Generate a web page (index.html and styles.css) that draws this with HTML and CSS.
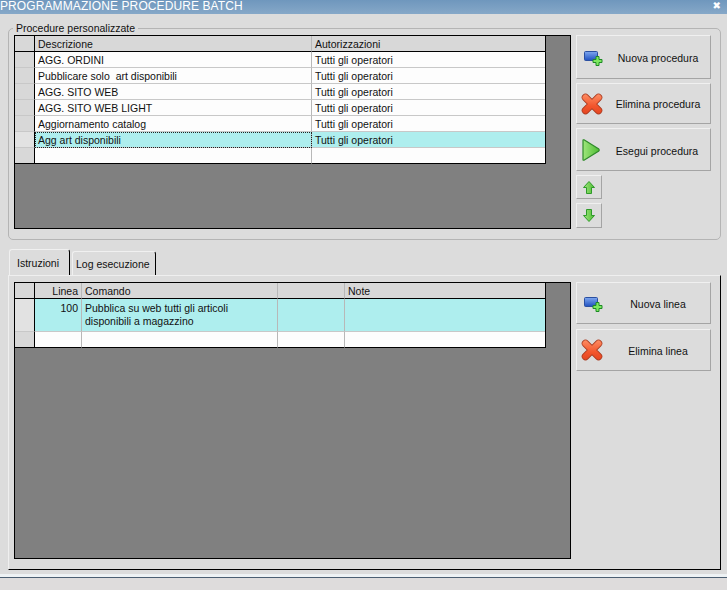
FILE: index.html
```html
<!DOCTYPE html>
<html lang="it">
<head>
<meta charset="utf-8">
<title>Programmazione procedure batch</title>
<link rel="stylesheet" href="styles.css">
</head>
<body>
<svg class="defs" width="0" height="0" aria-hidden="true">
  <defs>
    <linearGradient id="blue" x1="0" y1="0" x2="0" y2="1"><stop offset="0" stop-color="#7fa8f0"/><stop offset="1" stop-color="#1f50c0"/></linearGradient>
    <linearGradient id="green" x1="0" y1="0" x2="1" y2="0"><stop offset="0" stop-color="#9fe67c"/><stop offset="1" stop-color="#4fbc34"/></linearGradient>
    <linearGradient id="redstroke" gradientUnits="userSpaceOnUse" x1="0" y1="0" x2="0" y2="22"><stop offset="0" stop-color="#ff9268"/><stop offset="0.6" stop-color="#f2552c"/><stop offset="1" stop-color="#e2431f"/></linearGradient>
    <symbol id="i-new" viewBox="0 0 20 16">
      <rect x="0.500" y="0.500" width="13" height="9" rx="1" fill="url(#blue)" stroke="#2a4fa0"/>
      <path d="M12 5.500h3v3h3v3h-3v3h-3v-3h-3v-3h3z" fill="#7ee860" stroke="#1d8a24"/>
    </symbol>
    <symbol id="i-del" viewBox="0 0 22 22">
      <path d="M4.500 4.500 L17.500 17.500 M17.500 4.500 L4.500 17.500" fill="none" stroke="#a83a20" stroke-width="7.500" stroke-linecap="round"/>
      <path d="M4.500 4.500 L17.500 17.500 M17.500 4.500 L4.500 17.500" fill="none" stroke="url(#redstroke)" stroke-width="6" stroke-linecap="round"/>
    </symbol>
    <symbol id="i-play" viewBox="0 0 18 22">
      <path d="M1 1.500 Q1 0.500 2 0.800 L16.800 10 Q17.600 11 16.800 12 L2 21.200 Q1 21.500 1 20.500z" fill="url(#green)" stroke="#2f8a2a" stroke-width="1.200"/>
    </symbol>
    <symbol id="i-up" viewBox="0 0 12 13">
      <path d="M6 0.500 L11.500 6.500 H8.500 V12.500 H3.500 V6.500 H0.500z" fill="url(#green)" stroke="#2f9a2a"/>
    </symbol>
    <symbol id="i-down" viewBox="0 0 12 13">
      <path d="M6 12.500 L11.500 6.500 H8.500 V0.500 H3.500 V6.500 H0.500z" fill="url(#green)" stroke="#2f9a2a"/>
    </symbol>
  </defs>
</svg>

<header class="titlebar">
  <span class="title">PROGRAMMAZIONE PROCEDURE BATCH</span>
  <span class="close">✖</span>
</header>

<section class="group">
  <span class="legend">Procedure personalizzate</span>
  <div class="grid-area grid-area-top">
    <table class="grid">
      <colgroup><col class="c-ind"><col class="c-desc"><col class="c-auth"></colgroup>
      <thead><tr><th></th><th>Descrizione</th><th>Autorizzazioni</th></tr></thead>
      <tbody>
        <tr><th></th><td>AGG. ORDINI</td><td>Tutti gli operatori</td></tr>
        <tr><th></th><td>Pubblicare solo&nbsp; art disponibili</td><td>Tutti gli operatori</td></tr>
        <tr><th></th><td>AGG. SITO WEB</td><td>Tutti gli operatori</td></tr>
        <tr><th></th><td>AGG. SITO WEB LIGHT</td><td>Tutti gli operatori</td></tr>
        <tr><th></th><td>Aggiornamento catalog</td><td>Tutti gli operatori</td></tr>
        <tr class="selected"><th></th><td class="focus">Agg art disponibili</td><td>Tutti gli operatori</td></tr>
        <tr class="last"><th></th><td></td><td></td></tr>
      </tbody>
    </table>
  </div>
  <div class="actions">
    <button class="btn btn-top"><svg class="ico ico-new"><use href="#i-new"/></svg><span class="label">Nuova procedura</span></button>
    <button class="btn btn-mid"><svg class="ico ico-del"><use href="#i-del"/></svg><span class="label">Elimina procedura</span></button>
    <button class="btn btn-run"><svg class="ico ico-play"><use href="#i-play"/></svg><span class="label">Esegui procedura</span></button>
    <button class="btn-small btn-small-up" aria-label="Su"><svg class="ico-arrow"><use href="#i-up"/></svg></button>
    <button class="btn-small" aria-label="Giù"><svg class="ico-arrow"><use href="#i-down"/></svg></button>
  </div>
</section>

<nav class="tabs">
  <span class="tab active">Istruzioni</span>
  <span class="tab">Log esecuzione</span>
</nav>

<section class="panel">
  <div class="grid-area grid-area-bottom">
    <table class="grid">
      <colgroup><col class="c-ind"><col class="c-line"><col class="c-cmd"><col class="c-blank"><col class="c-note"></colgroup>
      <thead><tr><th></th><th class="num">Linea</th><th>Comando</th><th></th><th>Note</th></tr></thead>
      <tbody>
        <tr class="selected tall"><th></th><td class="num top">100</td><td class="top">Pubblica su web tutti gli articoli<br>disponibili a magazzino</td><td></td><td></td></tr>
        <tr class="last"><th></th><td></td><td></td><td></td><td></td></tr>
      </tbody>
    </table>
  </div>
  <div class="actions actions-low">
    <button class="btn btn-low"><svg class="ico ico-new"><use href="#i-new"/></svg><span class="label">Nuova linea</span></button>
    <button class="btn btn-low"><svg class="ico ico-del"><use href="#i-del"/></svg><span class="label">Elimina linea</span></button>
  </div>
</section>

<footer class="statusbar"></footer>
</body>
</html>
```

FILE: styles.css
```css
* { box-sizing: border-box; }

html, body {
  margin: 0;
  height: 590px;
  overflow: hidden;
}

body {
  background: #dcdcdc;
  color: #111;
  font-family: "Liberation Sans", Arial, sans-serif;
  font-size: 10.5px;
  line-height: 13px;
}

.defs { display: block; height: 0; }

.titlebar {
  height: 14px;
  display: flex;
  justify-content: space-between;
  align-items: flex-start;
  background: linear-gradient(#6f97bd, #86a8c8);
  color: #fff;
  overflow: hidden;
}

.title {
  font-size: 12px;
  line-height: 13px;
  letter-spacing: 0.1px;
  white-space: nowrap;
}

.close {
  font-size: 10px;
  line-height: 12px;
  font-weight: bold;
  margin-right: 6px;
  font-family: "DejaVu Sans", sans-serif;
}

.group {
  position: relative;
  display: flex;
  gap: 5px;
  height: 212px;
  margin: 14px 6px 0 8px;
  padding: 6px 9px 0 5px;
  border: 1px solid #b4b4b4;
  border-radius: 5px;
}

.legend {
  position: absolute;
  top: -7px;
  left: 4px;
  padding: 0 3px;
  background: #dcdcdc;
}

.grid-area {
  width: 557px;
  background: #808080;
  border: 1px solid #000;
  flex: none;
}

.grid-area-top { height: 194px; }
.grid-area-bottom { height: 277px; }

.grid {
  width: 531px;
  border-collapse: separate;
  border-spacing: 0;
  table-layout: fixed;
  background: #fff;
  border-right: 1px solid #000;
}

.c-ind { width: 20px; }
.c-desc { width: 277px; }
.c-auth { width: 233px; }
.c-line { width: 47px; }
.c-cmd { width: 196px; }
.c-blank { width: 67px; }
.c-note { width: 200px; }

.grid th,
.grid td {
  height: 16px;
  padding: 1px 3px 0;
  font-weight: normal;
  text-align: left;
  white-space: nowrap;
  overflow: hidden;
  border-right: 1px solid #b8b8b8;
  border-bottom: 1px solid #c8c8c8;
}

.grid th { background: #d8d8d8; }
.grid thead th { border-bottom-color: #000; }
.grid tr > th:first-child { border-right-color: #000; }
.grid tr > :last-child { border-right: 0; }
.grid .last th,
.grid .last td { border-bottom-color: #000; }

.grid td { background: #fdfdfd; }
.grid .selected td { background: #aeeeee; }
.grid .selected th { background: #e2e2e2; }
.grid .tall th, .grid .tall td { height: 33px; }

.grid .num { text-align: right; }
.grid .top { vertical-align: top; padding-top: 3px; }
.grid .focus { outline: 1px dotted #222; outline-offset: -1px; }

.actions {
  display: flex;
  flex-direction: column;
  align-items: flex-start;
  gap: 4px;
}

.actions-low { gap: 5px; }

.btn,
.btn-small {
  display: flex;
  align-items: center;
  justify-content: center;
  padding: 0;
  background: #dcdcdc;
  color: #111;
  font: inherit;
  border: 1px solid;
  border-color: #f0f0f0 #a4a4a4 #a4a4a4 #f0f0f0;
}

.btn { width: 135px; }
.btn-top { height: 44px; }
.btn-mid { height: 41px; }
.btn-run { height: 43px; }
.btn-low { height: 42px; }

.btn-small { width: 26px; height: 25px; }
.btn-small-up { height: 24px; }

.ico { flex: none; display: block; }
.ico-new { width: 20px; height: 16px; margin: 4px 2px 0 7px; }
.ico-del { width: 22px; height: 22px; margin: 0 3px 0 4px; }
.ico-play { width: 18px; height: 22px; margin: 0 4px 0 5px; }
.ico-arrow { width: 12px; height: 13px; display: block; }

.label {
  flex: 1;
  padding-top: 2px;
  text-align: center;
  white-space: nowrap;
}

.btn-run .label { padding-top: 4px; }

.tabs {
  display: flex;
  align-items: flex-end;
  height: 26px;
  margin: 9px 6px 0 9px;
  gap: 2px;
}

.tab {
  height: 24px;
  width: 84px;
  padding: 0 3px;
  line-height: 25px;
  border-top: 1px solid #f0f0f0;
  border-left: 1px solid #f0f0f0;
  border-right: 1px solid #000;
  border-radius: 3px 3px 0 0;
  white-space: nowrap;
}

.tab.active {
  height: 26px;
  width: 61px;
  padding-left: 7px;
  line-height: 27px;
}

.panel {
  display: flex;
  gap: 5px;
  height: 295px;
  margin: 0 6px 0 8px;
  padding: 6px 0 0 5px;
  border-top: 1px solid #efefef;
  border-left: 1px solid #efefef;
  border-right: 1px solid #000;
  border-bottom: 1px solid #000;
}

.statusbar {
  height: 16px;
  margin-top: 4px;
  border-top: 3px solid #eef2f4;
  background: #dedcdc;
}

.statusbar::before {
  content: "";
  display: block;
  height: 1px;
  background: #4c5f72;
}
```
